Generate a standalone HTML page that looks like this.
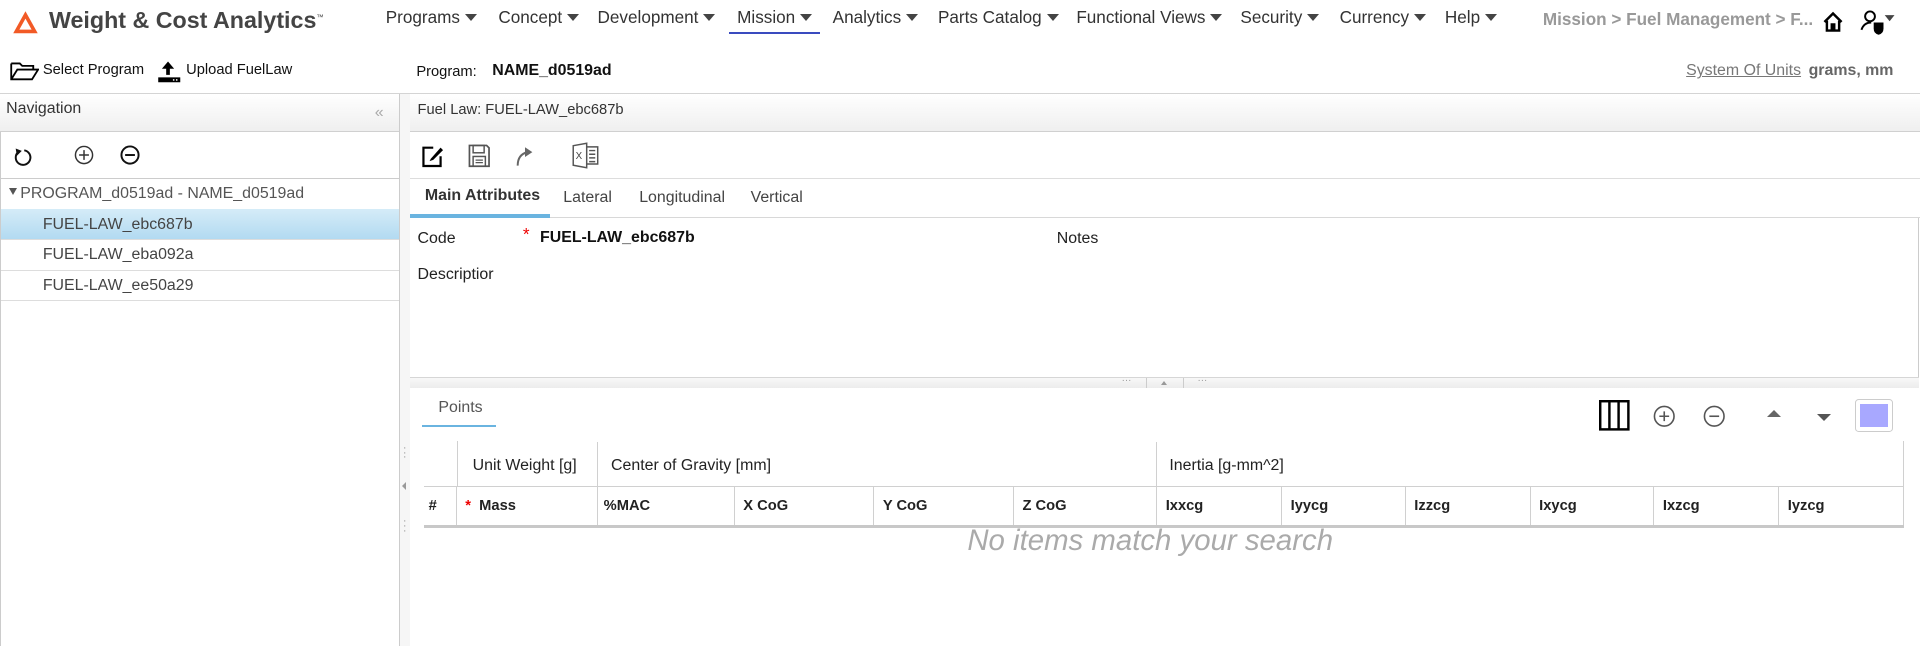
<!DOCTYPE html>
<html><head><meta charset="utf-8"><style>
*{box-sizing:border-box;margin:0;padding:0}
html,body{width:1920px;height:646px;overflow:hidden;background:#fff}
#w{zoom:1.2245;width:1568px;height:528px;position:relative;font-family:"Liberation Sans",sans-serif;font-size:13px;color:#333}
.a{position:absolute;white-space:nowrap}
.nav span{margin-right:0}
.tri{display:inline-block;width:0;height:0;border-left:5px solid transparent;border-right:5px solid transparent;border-top:6px solid #444;margin-left:4px;vertical-align:2px}
.cell{position:absolute;border-right:1px solid #d0d0d0;padding-left:7px;line-height:32px;color:#222}
</style></head><body><div id="w">
<!-- header -->
<svg class="a" style="left:10px;top:8px" width="22" height="20" viewBox="0 0 22 20"><path d="M11 1 L21 19 L1 19 Z M11 7 L6 16 L16 16 Z" fill="#f25a26" fill-rule="evenodd"/></svg>
<div class="a" style="left:40px;top:6px;font-size:19px;font-weight:bold;color:#444">Weight &amp; Cost Analytics<sup style="font-size:6px;font-weight:normal">™</sup></div>
<div class="a" style="left:315px;top:6px;font-size:14px;color:#333;word-spacing:0">
<span style="position:absolute;left:0">Programs<i class="tri"></i></span>
<span style="position:absolute;left:92px">Concept<i class="tri"></i></span>
<span style="position:absolute;left:173px">Development<i class="tri"></i></span>
<span style="position:absolute;left:287px">Mission<i class="tri"></i></span>
<span style="position:absolute;left:365px">Analytics<i class="tri"></i></span>
<span style="position:absolute;left:451px">Parts Catalog<i class="tri"></i></span>
<span style="position:absolute;left:564px">Functional Views<i class="tri"></i></span>
<span style="position:absolute;left:698px">Security<i class="tri"></i></span>
<span style="position:absolute;left:779px">Currency<i class="tri"></i></span>
<span style="position:absolute;left:865px">Help<i class="tri"></i></span>
</div>
<div class="a" style="left:595px;top:26px;width:75px;height:2px;background:#3a4bbf"></div>
<div class="a" style="left:1260px;top:7px;font-size:14px;font-weight:bold;color:#999">Mission &gt; Fuel Management &gt; F...</div>
<svg class="a" style="left:1488px;top:9px" width="18" height="18" viewBox="0 0 18 18"><path d="M2 9 L9 2 L16 9 M4 8 V16 H8 V11 H10 V16 H14 V8" fill="none" stroke="#000" stroke-width="2"/></svg>
<svg class="a" style="left:1518px;top:7px" width="30" height="22" viewBox="0 0 30 22"><circle cx="9" cy="6" r="4" fill="none" stroke="#000" stroke-width="1.6"/><path d="M2 17 Q4 11 10 11" fill="none" stroke="#000" stroke-width="1.6"/><path d="M12 11 H20 V16 Q20 20 16 21 Q12 20 12 16 Z" fill="#000"/><path d="M21 5 L29 5 L25 10 Z" fill="#444"/></svg>
<!-- row2 -->
<svg class="a" style="left:8px;top:50px" width="24" height="16" viewBox="0 0 24 16"><path d="M1 2 H8 L10 4 H19 V7 M1 2 V15 H18 L23 7 H6 L1 15" fill="none" stroke="#000" stroke-width="1.5"/></svg>
<div class="a" style="left:35px;top:51px;font-size:12px;color:#111">Select Program</div>
<svg class="a" style="left:128px;top:48px" width="20" height="20" viewBox="0 0 20 20"><path d="M9 2 L4 8 H7.5 V13 H10.5 V8 H14 Z" fill="#000"/><rect x="1" y="15" width="18" height="4" fill="#000"/><rect x="13" y="16.5" width="1.2" height="1.2" fill="#fff"/><rect x="15.5" y="16.5" width="1.2" height="1.2" fill="#fff"/></svg>
<div class="a" style="left:152px;top:51px;font-size:12px;color:#111">Upload FuelLaw</div>
<div class="a" style="left:340px;top:52px;font-size:12px;color:#111">Program:</div>
<div class="a" style="left:402px;top:51px;font-size:13px;font-weight:bold;color:#111">NAME_d0519ad</div>
<div class="a" style="left:1377px;top:51px;font-size:13px;color:#777;text-decoration:underline">System Of Units</div>
<div class="a" style="left:1477px;top:51px;font-size:13px;font-weight:bold;color:#666">grams, mm</div>
<div class="a" style="left:0;top:76px;width:1568px;height:1px;background:#d4d4d4"></div>
<!-- left panel -->
<div class="a" style="left:0;top:77px;width:327px;height:451px;border-right:1px solid #ccc;border-left:1px solid #ccc"></div>
<div class="a" style="left:0;top:77px;width:326px;height:31px;background:linear-gradient(#fff,#efefef);border-bottom:1px solid #d0d0d0"></div>
<div class="a" style="left:5px;top:82px;font-size:13px;color:#333">Navigation</div>
<div class="a" style="left:306px;top:85px;font-size:13px;color:#aaa">«</div>
<svg class="a" style="left:10px;top:119px" width="18" height="18" viewBox="0 0 18 18"><path d="M5 5 A6 6 0 1 0 10 3.5" fill="none" stroke="#111" stroke-width="1.6"/><path d="M3 2 L8 4 L4 8 Z" fill="#111"/></svg>
<svg class="a" style="left:60px;top:118px" width="18" height="18" viewBox="0 0 18 18"><circle cx="9" cy="9" r="7" fill="none" stroke="#333" stroke-width="1.2"/><path d="M9 5 V13 M5 9 H13" stroke="#333" stroke-width="1.2"/></svg>
<svg class="a" style="left:97px;top:118px" width="18" height="18" viewBox="0 0 18 18"><circle cx="9" cy="9" r="7" fill="none" stroke="#111" stroke-width="1.6"/><path d="M5 9 H13" stroke="#111" stroke-width="1.6"/></svg>
<div class="a" style="left:0;top:145px;width:326px;height:1px;background:#ccc"></div>
<div class="a" style="left:7px;top:151px;font-size:13px;color:#555"><i class="tri" style="margin:0 3px 0 0;border-top-color:#555;border-left-width:4px;border-right-width:4px"></i>PROGRAM_d0519ad - NAME_d0519ad</div>
<div class="a" style="left:1px;top:171px;width:325px;height:25px;background:linear-gradient(#d5ecf8,#b2daf1);border-bottom:1px solid #ddd"></div>
<div class="a" style="left:35px;top:176px;color:#444">FUEL-LAW_ebc687b</div>
<div class="a" style="left:1px;top:196px;width:325px;height:25px;border-bottom:1px solid #ddd"></div>
<div class="a" style="left:35px;top:201px;color:#444">FUEL-LAW_eba092a</div>
<div class="a" style="left:1px;top:221px;width:325px;height:25px;border-bottom:1px solid #ddd"></div>
<div class="a" style="left:35px;top:226px;color:#444">FUEL-LAW_ee50a29</div>
<!-- splitter -->
<div class="a" style="left:327px;top:77px;width:8px;height:451px;background:#f6f6f6"></div>
<div class="a" style="left:329px;top:364px;color:#999;font-size:9px;line-height:4px">·<br>·<br>·</div>
<div class="a" style="left:328px;top:394px;width:0;height:0;border-top:4px solid transparent;border-bottom:4px solid transparent;border-right:4px solid #999"></div>
<div class="a" style="left:329px;top:424px;color:#999;font-size:9px;line-height:4px">·<br>·<br>·</div>
<!-- right panel -->
<div class="a" style="left:335px;top:77px;width:1233px;height:31px;background:linear-gradient(#fff,#efefef);border-bottom:1px solid #d0d0d0"></div>
<div class="a" style="left:341px;top:83px;font-size:12px;color:#333">Fuel Law: FUEL-LAW_ebc687b</div>
<svg class="a" style="left:344px;top:118px" width="20" height="20" viewBox="0 0 20 20"><path d="M10 3 H2 V18 H16 V10" fill="none" stroke="#000" stroke-width="1.8"/><path d="M8 12 L16 3 L18 5 L10 13 L7 14 Z" fill="#000"/></svg>
<svg class="a" style="left:381px;top:117px" width="20" height="21" viewBox="0 0 20 21"><path d="M2 2 H16 L18 4 V19 H2 Z" fill="none" stroke="#555" stroke-width="1.4"/><rect x="5" y="2" width="9" height="6" fill="none" stroke="#555" stroke-width="1.2"/><rect x="5" y="11" width="10" height="8" fill="none" stroke="#555" stroke-width="1.2"/><path d="M7 14 H13 M7 16 H13" stroke="#555"/></svg>
<svg class="a" style="left:420px;top:119px" width="16" height="18" viewBox="0 0 16 18"><path d="M3 16 Q3 7 11 5" fill="none" stroke="#666" stroke-width="1.6"/><path d="M9 1 L15 5 L9 9 Z" fill="#666"/></svg>
<svg class="a" style="left:467px;top:116px" width="24" height="22" viewBox="0 0 24 22"><path d="M1 3 L12 1 V21 L1 19 Z" fill="none" stroke="#555" stroke-width="1.2"/><path d="M12 4 H21 V18 H12 M14 7 H19 M14 10 H19 M14 13 H19 M14 16 H19" fill="none" stroke="#555" stroke-width="1.2"/><text x="3" y="14" font-size="8" font-family="Liberation Sans" fill="#444">X</text></svg>
<div class="a" style="left:335px;top:145px;width:1233px;height:1px;background:#ddd"></div>
<div class="a" style="left:347px;top:153px;font-weight:bold;color:#333">Main Attributes</div>
<div class="a" style="left:460px;top:154px;color:#444">Lateral</div>
<div class="a" style="left:522px;top:154px;color:#444">Longitudinal</div>
<div class="a" style="left:613px;top:154px;color:#444">Vertical</div>
<div class="a" style="left:335px;top:177px;width:1233px;height:1px;background:#d8d8d8"></div>
<div class="a" style="left:335px;top:175px;width:114px;height:3px;background:#6ab4e0"></div>
<div class="a" style="left:1566px;top:178px;width:1px;height:138px;background:#ccc"></div>
<div class="a" style="left:341px;top:188px;color:#222">Code</div>
<div class="a" style="left:427px;top:183px;color:#e00;font-size:14px">*</div>
<div class="a" style="left:441px;top:187px;font-weight:bold;color:#111">FUEL-LAW_ebc687b</div>
<div class="a" style="left:863px;top:188px;color:#222">Notes</div>
<div class="a" style="left:341px;top:217px;color:#222">Descriptior</div>
<div class="a" style="left:335px;top:308px;width:1232px;height:9px;background:linear-gradient(#f8f8f8,#ececec);border-top:1px solid #d6d6d6"></div>
<div class="a" style="left:916px;top:306px;color:#999;font-size:8px">···</div>
<div class="a" style="left:936px;top:309px;width:1px;height:8px;background:#ccc"></div>
<div class="a" style="left:948px;top:311px;width:0;height:0;border-left:3px solid transparent;border-right:3px solid transparent;border-bottom:4px solid #999"></div>
<div class="a" style="left:966px;top:309px;width:1px;height:8px;background:#ccc"></div>
<div class="a" style="left:978px;top:306px;color:#999;font-size:8px">···</div>
<!-- points -->
<div class="a" style="left:358px;top:326px;color:#555">Points</div>
<div class="a" style="left:345px;top:347px;width:60px;height:2px;background:#6ab4e0"></div>
<svg class="a" style="left:1306px;top:327px" width="25" height="25" viewBox="0 0 25 25"><rect x="1" y="1" width="23" height="23" fill="none" stroke="#000" stroke-width="2"/><path d="M8.5 1 V24 M16 1 V24" stroke="#000" stroke-width="2"/></svg>
<svg class="a" style="left:1349px;top:330px" width="20" height="20" viewBox="0 0 20 20"><circle cx="10" cy="10" r="8" fill="none" stroke="#555" stroke-width="1.3"/><path d="M10 6 V14 M6 10 H14" stroke="#555" stroke-width="1.3"/></svg>
<svg class="a" style="left:1390px;top:330px" width="20" height="20" viewBox="0 0 20 20"><circle cx="10" cy="10" r="8" fill="none" stroke="#555" stroke-width="1.3"/><path d="M6 10 H14" stroke="#555" stroke-width="1.3"/></svg>
<div class="a" style="left:1443px;top:335px;border-left:6px solid transparent;border-right:6px solid transparent;border-bottom:6px solid #666"></div>
<div class="a" style="left:1484px;top:338px;border-left:6px solid transparent;border-right:6px solid transparent;border-top:6px solid #555"></div>
<div class="a" style="left:1515px;top:326px;width:31px;height:27px;border:1px solid #ccc;border-radius:3px;background:#fff"></div>
<div class="a" style="left:1519px;top:330px;width:23px;height:19px;background:#a8a8ff"></div>
<!-- table -->
<div class="a" style="left:373px;top:360px;width:1182px;height:38px;border-left:1px solid #d0d0d0;border-right:1px solid #d0d0d0"></div>
<div class="cell" style="left:373px;top:361px;width:115px;height:37px;padding-left:13px;line-height:40px">Unit Weight [g]</div>
<div class="cell" style="left:488px;top:361px;width:457px;height:37px;padding-left:11px;line-height:40px">Center of Gravity [mm]</div>
<div class="cell" style="left:945px;top:361px;width:610px;height:37px;padding-left:10px;line-height:40px">Inertia [g-mm^2]</div>
<div class="a" style="left:346px;top:397px;width:1209px;height:1px;background:#d0d0d0"></div>
<div class="a" style="left:346px;top:429px;width:1209px;height:2px;background:#c8c8c8"></div>
<div class="a" style="left:1554px;top:397px;width:1px;height:32px;background:#d0d0d0"></div>
<div style="position:absolute;left:0;top:398px;font-weight:bold;font-size:12px">
<div class="cell" style="left:346px;width:27px;height:31px;padding-left:4px">#</div>
<div class="cell" style="left:373px;width:115px;height:31px;padding-left:7px"><span style="color:#e00">*</span>&nbsp;&nbsp;Mass</div>
<div class="cell" style="left:488px;width:112px;height:31px;padding-left:5px">%MAC</div>
<div class="cell" style="left:600px;width:114px;height:31px">X CoG</div>
<div class="cell" style="left:714px;width:114px;height:31px">Y CoG</div>
<div class="cell" style="left:828px;width:117px;height:31px">Z CoG</div>
<div class="cell" style="left:945px;width:102px;height:31px">Ixxcg</div>
<div class="cell" style="left:1047px;width:101px;height:31px">Iyycg</div>
<div class="cell" style="left:1148px;width:102px;height:31px">Izzcg</div>
<div class="cell" style="left:1250px;width:101px;height:31px">Ixycg</div>
<div class="cell" style="left:1351px;width:102px;height:31px">Ixzcg</div>
<div class="cell" style="left:1453px;width:102px;height:31px;border-right:none">Iyzcg</div>
</div>
<div class="a" style="left:790px;top:428px;font-size:24px;font-style:italic;color:#aaa">No items match your search</div>
</div></body></html>
